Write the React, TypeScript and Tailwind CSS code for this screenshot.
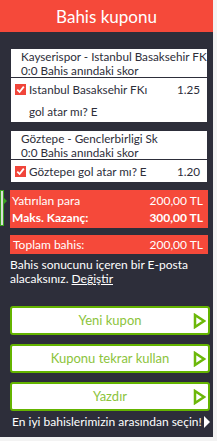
import { Fragment } from "react";

const font = { fontFamily: 'Lato, "Noto Sans", sans-serif' };

const Arrow = () => (
  <svg width="13" height="16" viewBox="0 0 13 16" className="absolute right-[2px] top-1/2 -translate-y-1/2">
    <path d="M2 2 L11 8 L2 14 Z" fill="none" stroke="#6cb80a" strokeWidth="2.5" strokeLinejoin="miter" />
  </svg>
);

type Bet = { match: string; pick: string[]; odd: string };

const bets: Bet[] = [
  { match: "Kayserispor - Istanbul Basaksehir FK", pick: ["Istanbul Basaksehir FKı", "gol atar mı? E"], odd: "1.25" },
  { match: "Göztepe - Genclerbirligi Sk", pick: ["Göztepeı gol atar mı? E"], odd: "1.20" },
];

const Check = () => (
  <span className="w-[11px] h-[11px] bg-[#f0453a] flex items-center justify-center shrink-0">
    <svg width="9" height="9" viewBox="0 0 9 9">
      <path d="M1.3 4.6 L3.6 7 L7.8 1.6" fill="none" stroke="#fff" strokeWidth="1.8" />
    </svg>
  </span>
);

export default function App() {
  return (
    <div className="w-[217px] h-[441px] bg-[#f3f3f3] overflow-hidden" style={font}>
      <div className="w-[213px] h-[437px] bg-[#2d2e3a] relative">
        <div className="h-[32px] bg-[#f5493a] flex items-center justify-center text-white text-[17px] pt-[2px]">
          Bahis kuponu
        </div>

        <div className="pl-[11px] pr-[6px] pt-[17px] flex flex-col gap-[9px]">
          {bets.map((b, i) => (
            <div key={i} className="bg-white text-[#2d2e3a] text-[11.7px] leading-[14px]">
              <div className="pl-[10px] border-b border-[#2d2e3a] whitespace-nowrap">
                <div>{b.match}</div>
                <div>0:0 Bahis anındaki skor</div>
              </div>
              <div className="pl-[4px] pr-[7px] pt-[4px] pb-[4px]">
                <div className="flex items-center gap-[3px] h-[14px]">
                  <Check />
                  <span className="flex-1">{b.pick[0]}</span>
                  <span>{b.odd}</span>
                </div>
                {b.pick.slice(1).map((p) => (
                  <Fragment key={p}>
                    <div className="pl-[14px] mt-[8px] h-[14px]">{p}</div>
                  </Fragment>
                ))}
              </div>
            </div>
          ))}
        </div>

        <div className="ml-[10px] mr-[5px] mt-[8px] bg-[#f5493a] text-white text-[12px] pl-[2px] pr-[5px] pt-[2px] pb-[2px] leading-[17px]">
          <div className="flex justify-between">
            <span>Yatırılan para</span>
            <span>200,00 TL</span>
          </div>
          <div className="flex justify-between font-bold">
            <span>Maks. Kazanç:</span>
            <span>300,00 TL</span>
          </div>
        </div>
        <div className="absolute left-0 top-[190px] w-[4px] h-[36px] bg-[#d9ded6] border border-[#3aa020]" />
        <div className="absolute left-[3px] top-[197px] w-0 h-0 border-y-[4px] border-y-transparent border-l-[4px] border-l-[#3aa020]" />

        <div className="ml-[10px] mr-[5px] mt-[7px] h-[19px] bg-[#f5493a] text-white text-[12px] pl-[3px] pr-[5px] flex items-center justify-between">
          <span>Toplam bahis:</span>
          <span>200,00 TL</span>
        </div>

        <div className="ml-[10px] mt-[4px] text-white text-[12px] leading-[14px]">
          <div>Bahis sonucunu içeren bir E-posta</div>
          <div>
            alacaksınız. <span className="underline">Değiştir</span>
          </div>
        </div>

        <div className="ml-[10px] mr-[3px] mt-[20px] flex flex-col gap-[9px]">
          {["Yeni kupon", "Kuponu tekrar kullan", "Yazdır"].map((t) => (
            <div
              key={t}
              className="relative h-[29px] bg-white border-2 border-[#64b400] rounded-[3px] flex items-center justify-center text-[#8cc43c] text-[13px]"
            >
              {t}
              <Arrow />
            </div>
          ))}
        </div>

        <div className="ml-[12px] mt-[4px] flex items-center text-white text-[12px] leading-[14px]">
          <span>En iyi bahislerimizin arasından seçin!</span>
          <span className="ml-[2px] w-0 h-0 border-y-[6px] border-y-transparent border-l-[6px] border-l-white" />
        </div>
      </div>
    </div>
  );
}
